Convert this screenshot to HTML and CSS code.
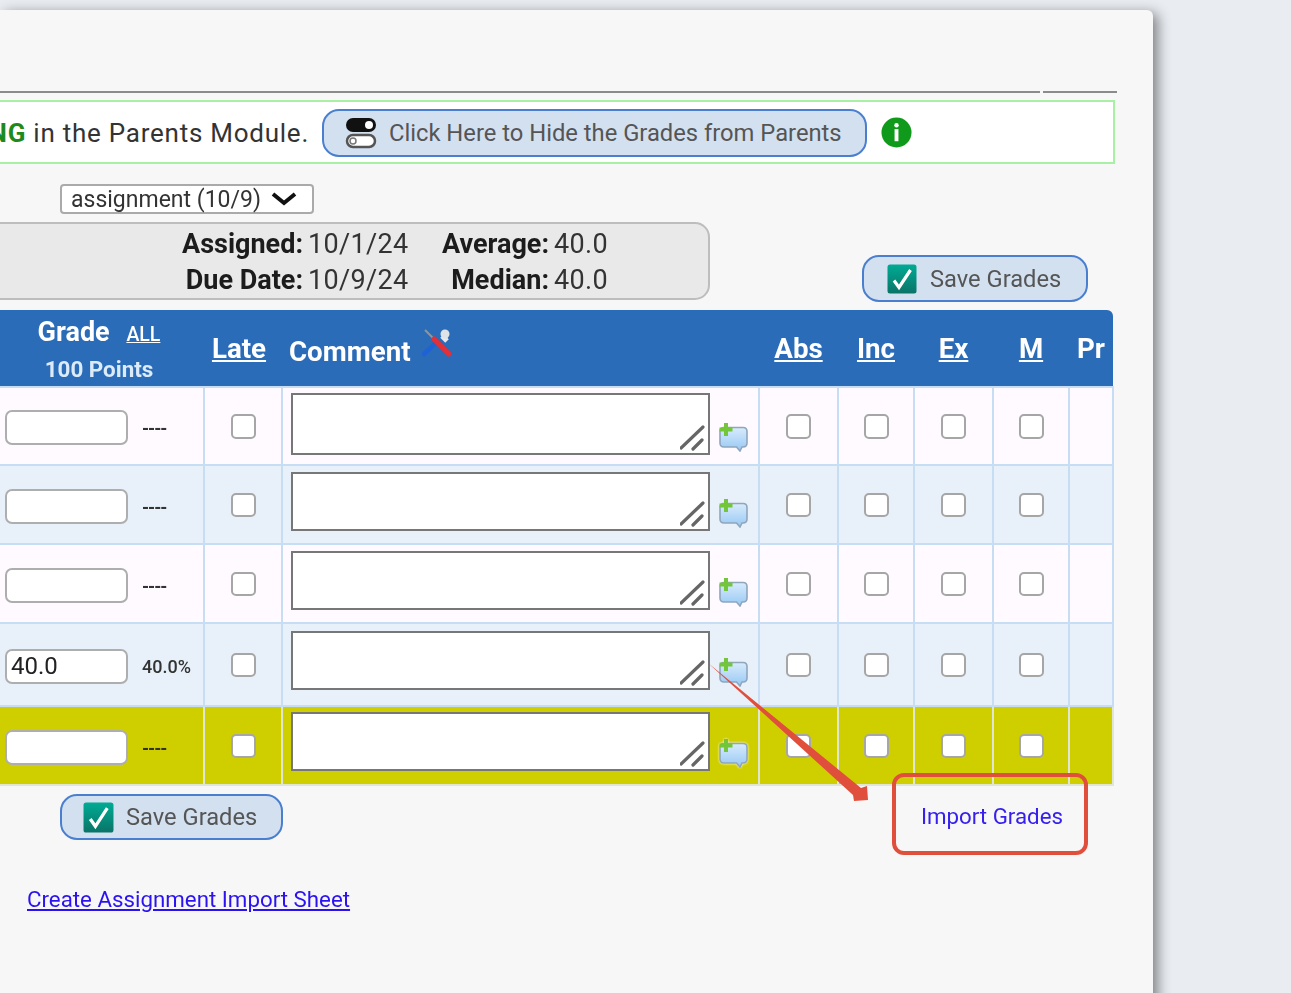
FILE: index.html
```html
<!DOCTYPE html>
<html lang="en">
<head>
<meta charset="utf-8">
<title>Grades</title>
<link rel="stylesheet" href="styles.css">
</head>
<body>
<svg class="defs" width="0" height="0" aria-hidden="true">
  <defs>
    <linearGradient id="teal" x1="0" y1="0" x2="0" y2="1">
      <stop offset="0" stop-color="#00ab94"/>
      <stop offset="1" stop-color="#0a7468"/>
    </linearGradient>
    <linearGradient id="bubble" x1="0" y1="0" x2="0" y2="1">
      <stop offset="0" stop-color="#d8ebfc"/>
      <stop offset="1" stop-color="#96c8f4"/>
    </linearGradient>
    <symbol id="check" viewBox="0 0 30 30">
      <rect x="0.5" y="0.5" width="29" height="29" rx="2.5" fill="url(#teal)"/>
      <path d="M7 16.5 L12 23.5 L23.5 6" fill="none" stroke="#fff" stroke-width="3.2"/>
    </symbol>
    <symbol id="comment" viewBox="0 0 30 30">
      <path d="M6 5.500 H25 Q29 5.500 29 9.500 V21 Q29 25 25 25 H24 L22 29 L18.500 25 H6 Q2 25 2 21 V9.500 Q2 5.500 6 5.500 Z" fill="url(#bubble)" stroke="#8fa6bd" stroke-width="1.600"/>
      <path d="M6 1 H10 V5.500 H14.500 V9.500 H10 V14 H6 V9.500 H1.500 V5.500 H6 Z" fill="#73c63a"/>
    </symbol>
    <symbol id="grip" viewBox="0 0 26 26">
      <path d="M1 23 L23 2 M13 24 L22 15" stroke="#666" stroke-width="3.200" stroke-linecap="round" fill="none"/>
    </symbol>
  </defs>
</svg>
<main class="panel">
  <div class="rules"><span class="rule-long"></span><span class="rule-short"></span></div>

  <section class="notice">
    <p class="notice-text"><span>Grades are <b>SHOWING</b> in the Parents Module.</span></p>
    <button class="pill hide-btn" type="button">
      <svg class="toggle" width="32" height="32" viewBox="0 0 32 32" aria-hidden="true">
        <rect x="1" y="1" width="30" height="14" rx="7" fill="#111"/>
        <circle cx="24" cy="8" r="4" fill="#fff"/>
        <rect x="2" y="18" width="28" height="12" rx="6" fill="#fff" stroke="#555" stroke-width="2.500"/>
        <circle cx="8" cy="24" r="3" fill="none" stroke="#777" stroke-width="1.500"/>
      </svg>
      Click Here to Hide the Grades from Parents
    </button>
    <svg class="info" width="31" height="31" viewBox="0 0 32 32" aria-hidden="true">
      <circle cx="16" cy="16" r="15.500" fill="#109a1b"/>
      <circle cx="16" cy="8.500" r="2.300" fill="#fff"/>
      <rect x="14" y="12.500" width="4" height="12.500" fill="#fff"/>
    </svg>
  </section>

  <div class="select-box">assignment (10/9)
    <svg width="26" height="14" viewBox="0 0 26 14" aria-hidden="true"><path d="M2 2 L13 11 L24 2" fill="none" stroke="#111" stroke-width="4"/></svg>
  </div>

  <div class="stats-row">
    <dl class="stats">
      <dt>Assigned:</dt><dd>10/1/24</dd><dt>Average:</dt><dd>40.0</dd>
      <dt>Due Date:</dt><dd>10/9/24</dd><dt>Median:</dt><dd>40.0</dd>
    </dl>
    <button class="pill save save-top" type="button"><svg width="30" height="30" aria-hidden="true"><use href="#check"/></svg>Save Grades</button>
  </div>

  <table class="grades">
    <colgroup>
      <col class="c-grade"><col class="c-late"><col class="c-comment"><col class="c-abs"><col class="c-inc"><col class="c-ex"><col class="c-m"><col class="c-pr">
    </colgroup>
    <thead>
      <tr>
        <th class="th-grade">
          <div class="grade-top">Grade <a href="#" class="all">ALL</a></div>
          <div class="points">100 Points</div>
        </th>
        <th class="th-late"><a href="#">Late</a></th>
        <th class="th-comment">Comment
          <svg class="tools" width="30" height="30" viewBox="0 0 30 30" aria-hidden="true">
            <path d="M3 2 L15 14" stroke="#8a97a5" stroke-width="2"/>
            <path d="M15 14 L2 26" stroke="#1f62d6" stroke-width="4.500" stroke-linecap="round"/>
            <path d="M12 11 L27 26" stroke="#e0303a" stroke-width="5" stroke-linecap="round"/>
            <path d="M20 8 L25 13" stroke="#e8e8e8" stroke-width="5"/>
            <circle cx="23" cy="6" r="4.500" fill="#dfe3e8"/>
          </svg>
        </th>
        <th><a href="#">Abs</a></th>
        <th><a href="#">Inc</a></th>
        <th><a href="#">Ex</a></th>
        <th><a href="#">M</a></th>
        <th class="th-pr">Pr</th>
      </tr>
    </thead>
    <tbody>
      <tr class="row-a r1">
        <td class="grade"><input class="score" type="text"><span class="pct dash">----</span></td>
        <td><input class="box" type="checkbox"></td>
        <td class="comment"><div class="comment-wrap"><div class="ta-wrap"><textarea class="ta-62"></textarea><svg class="grip" width="26" height="26" aria-hidden="true"><use href="#grip"/></svg></div><svg class="bubble" width="30" height="30" aria-hidden="true"><use href="#comment"/></svg></div></td>
        <td><input class="box" type="checkbox"></td>
        <td><input class="box" type="checkbox"></td>
        <td><input class="box" type="checkbox"></td>
        <td><input class="box" type="checkbox"></td>
        <td></td>
      </tr>
      <tr class="row-b r2">
        <td class="grade"><input class="score" type="text"><span class="pct dash">----</span></td>
        <td><input class="box" type="checkbox"></td>
        <td class="comment"><div class="comment-wrap"><div class="ta-wrap"><textarea></textarea><svg class="grip" width="26" height="26" aria-hidden="true"><use href="#grip"/></svg></div><svg class="bubble" width="30" height="30" aria-hidden="true"><use href="#comment"/></svg></div></td>
        <td><input class="box" type="checkbox"></td>
        <td><input class="box" type="checkbox"></td>
        <td><input class="box" type="checkbox"></td>
        <td><input class="box" type="checkbox"></td>
        <td></td>
      </tr>
      <tr class="row-a r3">
        <td class="grade"><input class="score" type="text"><span class="pct dash">----</span></td>
        <td><input class="box" type="checkbox"></td>
        <td class="comment"><div class="comment-wrap"><div class="ta-wrap"><textarea></textarea><svg class="grip" width="26" height="26" aria-hidden="true"><use href="#grip"/></svg></div><svg class="bubble" width="30" height="30" aria-hidden="true"><use href="#comment"/></svg></div></td>
        <td><input class="box" type="checkbox"></td>
        <td><input class="box" type="checkbox"></td>
        <td><input class="box" type="checkbox"></td>
        <td><input class="box" type="checkbox"></td>
        <td></td>
      </tr>
      <tr class="row-b r4">
        <td class="grade"><input class="score" type="text" value="40.0"><span class="pct">40.0%</span></td>
        <td><input class="box" type="checkbox"></td>
        <td class="comment"><div class="comment-wrap"><div class="ta-wrap"><textarea></textarea><svg class="grip" width="26" height="26" aria-hidden="true"><use href="#grip"/></svg></div><svg class="bubble" width="30" height="30" aria-hidden="true"><use href="#comment"/></svg></div></td>
        <td><input class="box" type="checkbox"></td>
        <td><input class="box" type="checkbox"></td>
        <td><input class="box" type="checkbox"></td>
        <td><input class="box" type="checkbox"></td>
        <td></td>
      </tr>
      <tr class="row-y r5">
        <td class="grade"><input class="score" type="text"><span class="pct dash">----</span></td>
        <td><input class="box" type="checkbox"></td>
        <td class="comment"><div class="comment-wrap"><div class="ta-wrap"><textarea></textarea><svg class="grip" width="26" height="26" aria-hidden="true"><use href="#grip"/></svg></div><svg class="bubble" width="30" height="30" aria-hidden="true"><use href="#comment"/></svg></div></td>
        <td><input class="box" type="checkbox"></td>
        <td><input class="box" type="checkbox"></td>
        <td><input class="box" type="checkbox"></td>
        <td><input class="box" type="checkbox"></td>
        <td></td>
      </tr>
    </tbody>
  </table>

  <div class="bottom-row">
    <button class="pill save save-bottom" type="button"><svg width="31" height="31" aria-hidden="true"><use href="#check"/></svg>Save Grades</button>
    <a href="#" class="import">Import Grades</a>
  </div>

  <a href="#" class="sheet-link">Create Assignment Import Sheet</a>

  <div class="mark-rect"></div>
  <svg class="mark-arrow" width="180" height="170" viewBox="0 0 180 170" aria-hidden="true">
    <polygon points="8,13 161,138 167,136 168,150 154,151 153,145" fill="#e04f3c"/>
  </svg>
</main>
</body>
</html>
```

FILE: styles.css
```css
html, body {
  margin: 0;
  height: 993px;
  overflow: hidden;
  background: #e9edf2;
}
body {
  font-family: Roboto, "Liberation Sans", sans-serif;
  color: #222;
}
.defs { position: absolute; }
.panel {
  position: relative;
  box-sizing: border-box;
  width: 1153px;
  height: 1010px;
  margin-top: 10px;
  padding-top: 81px;
  background: #f7f7f7;
  border-radius: 0 6px 0 0;
  box-shadow: 5px 3px 13px rgba(0, 0, 0, .45);
  overflow: visible;
  clip-path: inset(-20px -40px 0 0);
  filter: blur(.55px);
}
.rules { display: flex; gap: 3px; width: 1117px; height: 2px; }
.rule-long { flex: 1; background: #8b8b8b; }
.rule-short { width: 74px; background: #8b8b8b; }

.notice {
  box-sizing: border-box;
  display: flex;
  align-items: center;
  width: 1115px;
  height: 64px;
  margin-top: 7px;
  background: #fff;
  border: 2px solid #aaf0a4;
  border-left: 0;
}
.notice-text {
  display: flex;
  justify-content: flex-end;
  width: 309px;
  margin: 2px 0 0;
  overflow: hidden;
  white-space: nowrap;
  font-size: 26px;
  letter-spacing: .75px;
  color: #333;
}
.notice-text b { color: #1d8a1d; font-weight: 700; }
.pill {
  display: flex;
  align-items: center;
  box-sizing: border-box;
  background: #d3e0f0;
  border: 2px solid #4a7fcf;
  border-radius: 17px;
  font-family: Roboto, sans-serif;
  color: #555;
  padding: 0;
  white-space: nowrap;
}
.hide-btn {
  width: 545px;
  height: 48px;
  margin: 1px 0 0 13px;
  padding-left: 21px;
  gap: 12px;
  font-size: 23.750px;
}
.info { margin-left: 14px; }

.select-box {
  box-sizing: border-box;
  display: flex;
  align-items: center;
  gap: 10px;
  width: 254px;
  height: 30px;
  margin: 20px 0 0 60px;
  padding-left: 9px;
  background: #fff;
  border: 2px solid #aaa;
  border-radius: 4px;
  font-size: 23px;
  color: #333;
}
.stats-row { display: flex; margin-top: 8px; height: 80px; }
.stats {
  box-sizing: border-box;
  display: grid;
  grid-template-columns: 303px 107px 129px auto;
  column-gap: 5px;
  align-content: center;
  row-gap: 8px;
  width: 710px;
  height: 78px;
  margin: 0;
  padding-top: 2px;
  background: #e9e9e9;
  border: 2px solid #bdbdbd;
  border-left: 0;
  border-radius: 0 15px 15px 0;
  font-size: 27px;
  line-height: 28px;
}
.stats dt { text-align: right; font-weight: 700; color: #1c1c1c; }
.stats dd { margin: 0; color: #333; letter-spacing: .35px; }
.save { font-size: 23.700px; }
.save-top {
  width: 226px;
  height: 47px;
  margin: 33px 0 0 152px;
  padding-left: 23px;
  gap: 13px;
}
.grades {
  table-layout: fixed;
  border-collapse: collapse;
  width: 1113px;
  margin-top: 8px;
}
.c-grade { width: 204px; }
.c-late { width: 78px; }
.c-comment { width: 477px; }
.c-abs { width: 79px; }
.c-inc { width: 76px; }
.c-ex { width: 79px; }
.c-m { width: 76px; }
.c-pr { width: 44px; }
.grades thead th {
  box-sizing: border-box;
  height: 77px;
  padding: 0;
  background: #2b6cb8;
  color: #fff;
  font-size: 27.700px;
  font-weight: 700;
  text-align: center;
  vertical-align: middle;
}
.grades thead th:last-child { border-top-right-radius: 6px; }
.grades th a { color: #fff; }
.grades thead .th-late { padding-right: 8px; }
.grades thead .th-grade { padding-right: 6px; }
.grade-top { font-size: 27px; line-height: 30px; padding-top: 2px; }
.grade-top .all { font-size: 19.500px; font-weight: 500; margin-left: 10px; }
.points { font-size: 22.400px; color: #dcebf8; line-height: 26px; margin-top: 6px; }
.grades thead .th-comment { text-align: left; padding-left: 7px; white-space: nowrap; }
.tools { vertical-align: 3px; margin-left: 5px; }
.grades td {
  box-sizing: border-box;
  padding: 0;
  text-align: center;
  vertical-align: middle;
  border: 2px solid #c7ddf4;
  border-left: 0;
}
.grades tbody tr > td:first-child { border-left: 0; }
.r1 td { height: 78px; }
.r2 td, .r3 td, .r5 td { height: 79px; }
.r4 td { height: 83px; }
.row-a td { background: #fefaff; }
.row-b td { background: #e8f1f9; }
.row-y td { background: #cfcf00; border-color: #dfe6d6; }
.grades td.grade { text-align: left; white-space: nowrap; padding-left: 5px; padding-top: 3px; }
.score {
  box-sizing: border-box;
  width: 123px;
  height: 35px;
  margin: 0;
  padding: 0 4px;
  background: #fff;
  border: 2px solid #aeaeae;
  border-radius: 7px;
  font: 24px Roboto, sans-serif;
  color: #222;
  vertical-align: middle;
}
.pct {
  margin-left: 14px;
  font-size: 18px;
  font-weight: 500;
  color: #333;
  vertical-align: middle;
}
.dash { letter-spacing: -1px; font-weight: 700; position: relative; top: 1px; }
.box {
  appearance: none;
  box-sizing: border-box;
  display: block;
  width: 25px;
  height: 24px;
  margin: 0 auto;
  background: #fff;
  border: 2.500px solid #a6a6a6;
  border-radius: 5px;
}
.r1 .box { height: 25px; margin-top: 1px; }
.grades td.comment { vertical-align: top; text-align: left; padding-left: 8px; }
.r1 .comment { padding-top: 5px; }
.r2 .comment, .r3 .comment { padding-top: 6px; }
.r4 .comment { padding-top: 7px; }
.r5 .comment { padding-top: 5px; }
.comment-wrap { display: flex; align-items: flex-end; gap: 8px; }
.ta-wrap { position: relative; display: block; height: 59px; }
textarea {
  display: block;
  box-sizing: border-box;
  width: 419px;
  height: 59px;
  margin: 0;
  background: #fff;
  border: 2px solid #777;
  border-radius: 0;
  resize: none;
}
.ta-wrap:has(.ta-62), .ta-62 { height: 62px; }
.grip { position: absolute; right: 4px; bottom: 4px; }
.bubble { flex: none; margin-bottom: 3px; }
.row-y .bubble { filter: drop-shadow(0 0 1px #fff); }

.bottom-row {
  display: flex;
  align-items: center;
  justify-content: space-between;
  box-sizing: border-box;
  width: 1113px;
  margin-top: 8px;
  padding: 0 50px 0 60px;
}
.save-bottom {
  width: 223px;
  height: 46px;
  padding-left: 21px;
  gap: 12px;
}
.import { font-size: 22.300px; color: #3520ee; text-decoration: none; padding-bottom: 2px; }
.sheet-link {
  display: inline-block;
  margin: 46px 0 0 27px;
  font-size: 22.300px;
  color: #2a13f0;
}
.mark-rect {
  position: absolute;
  left: 892px;
  top: 763px;
  box-sizing: border-box;
  width: 196px;
  height: 82px;
  border: 4px solid #e04f3c;
  border-radius: 12px;
}
.mark-arrow { position: absolute; left: 700px; top: 640px; }
```
